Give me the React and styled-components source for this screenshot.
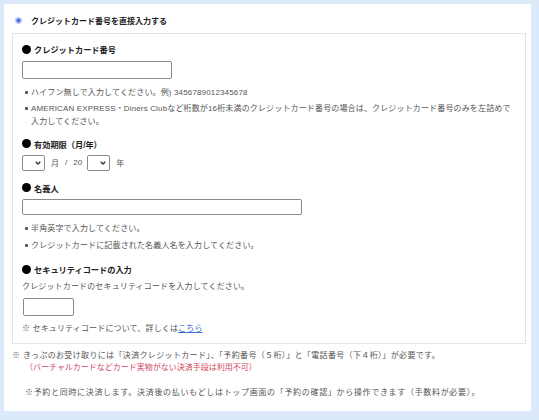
import React from "react";
import styled, { createGlobalStyle } from "styled-components";

const Global = createGlobalStyle`
  html, body { margin: 0; padding: 0; }
  body {
    background: #dce9fb;
    font-family: "Liberation Sans", "Noto Sans CJK JP", sans-serif;
    color: #555;
  }
`;

const Panel = styled.div`
  margin: 4px 0 0 4px;
  width: 527px;
  height: 407px;
  box-sizing: border-box;
  background: #fff;
  padding: 9px 5px 0 8px;
`;

const RadioRow = styled.label`
  display: flex;
  align-items: center;
  height: 14px;
  font-size: 8px;
  font-weight: bold;
  color: #222;
`;

const RadioDot = styled.span`
  width: 7px;
  height: 7px;
  margin: 0 9px 0 3px;
  border-radius: 50%;
  box-sizing: border-box;
  border: 1px solid #a9bdf3;
  background: radial-gradient(circle, #4f72e6 0 1.8px, #cfdafa 2.4px);
`;

const FormBox = styled.div`
  margin-top: 6px;
  border: 1px solid #e4e4e4;
  padding: 8.5px 10px 8px 9px;
  display: flex;
  flex-direction: column;
  align-items: flex-start;
  letter-spacing: 0.15px;
`;

const Heading = styled.div`
  display: flex;
  align-items: center;
  height: 13px;
  font-size: 8.2px;
  font-weight: bold;
  color: #222;
  letter-spacing: 0;
  margin-top: ${(p) => p.$gap || 0}px;
  &::before {
    content: "";
    width: 9px;
    height: 9px;
    border-radius: 50%;
    background: #000;
    margin-right: 3px;
  }
`;

const TextInput = styled.input`
  display: block;
  box-sizing: border-box;
  width: ${(p) => p.$w}px;
  height: ${(p) => p.$h}px;
  margin-top: ${(p) => p.$gap}px;
  margin-left: ${(p) => p.$indent || 0}px;
  border: 1px solid #8a8a8a;
  border-radius: 2px;
  background: #fff;
  padding: 0 3px;
  font-size: 8px;
`;

const Notes = styled.ul`
  list-style: none;
  margin: ${(p) => p.$gap}px 0 0;
  padding: 0;
  display: flex;
  flex-direction: column;
  gap: ${(p) => p.$rowGap}px;
`;

const Note = styled.li`
  position: relative;
  padding-left: 9px;
  font-size: 8px;
  line-height: 13px;
  &::before {
    content: "";
    position: absolute;
    left: 3px;
    top: 5px;
    width: 3px;
    height: 3px;
    border-radius: 1px;
    background: #555;
  }
`;

const Line = styled.div`
  font-size: 8px;
  line-height: 13px;
  margin-top: ${(p) => p.$gap || 0}px;
`;

const ExpiryRow = styled.div`
  display: flex;
  align-items: center;
  margin-top: 4.5px;
  font-size: 8px;
  color: #555;
  letter-spacing: 0;
`;

const SelectWrap = styled.span`
  position: relative;
  display: inline-block;
  width: 23px;
  height: 16px;
  svg {
    position: absolute;
    right: 4px;
    top: 6px;
    pointer-events: none;
  }
`;

const Select = styled.select`
  appearance: none;
  width: 100%;
  height: 100%;
  box-sizing: border-box;
  border: 1px solid #8a8a8a;
  border-radius: 2px;
  background: #fff;
  margin: 0;
  padding: 0;
`;

const Unit = styled.span`
  margin: 0 ${(p) => p.$r}px 0 ${(p) => p.$l}px;
`;

const Link = styled.a`
  color: #3a6fd8;
  text-decoration: underline;
`;

const Footer = styled.div`
  margin-top: 6px;
  font-size: 8px;
  line-height: 12px;
`;

const Requirement = styled.div`
  letter-spacing: 0.35px;
`;

const Warn = styled.div`
  color: #d0485f;
  padding-left: 13px;
`;

const Later = styled.div`
  margin-top: 13px;
  padding-left: 13px;
  letter-spacing: 0.68px;
`;

const Chevron = () => (
  <svg width="6" height="4" viewBox="0 0 6 4">
    <path d="M0.7 0.7 L3 3 L5.3 0.7" fill="none" stroke="#333" strokeWidth="1.3" />
  </svg>
);

const MonthYearSelect = () => (
  <SelectWrap>
    <Select defaultValue="">
      <option value=""></option>
    </Select>
    <Chevron />
  </SelectWrap>
);

export default function App() {
  return (
    <>
      <Global />
      <Panel>
        <RadioRow>
          <RadioDot />
          クレジットカード番号を直接入力する
        </RadioRow>
        <FormBox>
          <Heading>クレジットカード番号</Heading>
          <TextInput $w={150} $h={18} $gap={5.5} />
          <Notes $gap={6.5} $rowGap={3}>
            <Note>ハイフン無しで入力してください。例) 3456789012345678</Note>
            <Note>
              AMERICAN EXPRESS・Diners Clubなど桁数が16桁未満のクレジットカード番号の場合は、クレジットカード番号のみを左詰めで入力してください。
            </Note>
          </Notes>

          <Heading $gap={9.5}>有効期限（月/年）</Heading>
          <ExpiryRow>
            <MonthYearSelect />
            <Unit $l={6} $r={0}>月</Unit>
            <Unit $l={6} $r={0}>/</Unit>
            <Unit $l={6} $r={5}>20</Unit>
            <MonthYearSelect />
            <Unit $l={6} $r={0}>年</Unit>
          </ExpiryRow>

          <Heading $gap={10.5}>名義人</Heading>
          <TextInput $w={280} $h={16} $gap={4.5} />
          <Notes $gap={7.5} $rowGap={3.5}>
            <Note>半角英字で入力してください。</Note>
            <Note>クレジットカードに記載された名義人名を入力してください。</Note>
          </Notes>

          <Heading $gap={11}>セキュリティコードの入力</Heading>
          <Line $gap={4}>クレジットカードのセキュリティコードを入力してください。</Line>
          <TextInput $w={51} $h={18} $gap={5.5} $indent={1} />
          <Line $gap={5.5}>
            ※ セキュリティコードについて、詳しくは<Link href="#">こちら</Link>
          </Line>
        </FormBox>
        <Footer>
          <Requirement>
            ※ きっぷのお受け取りには「決済クレジットカード」、「予約番号（５桁）」と「電話番号（下４桁）」が必要です。
          </Requirement>
          <Warn>（バーチャルカードなどカード実物がない決済手段は利用不可）</Warn>
          <Later>
            ※予約と同時に決済します。決済後の払いもどしはトップ画面の「予約の確認」から操作できます（手数料が必要）。
          </Later>
        </Footer>
      </Panel>
    </>
  );
}
